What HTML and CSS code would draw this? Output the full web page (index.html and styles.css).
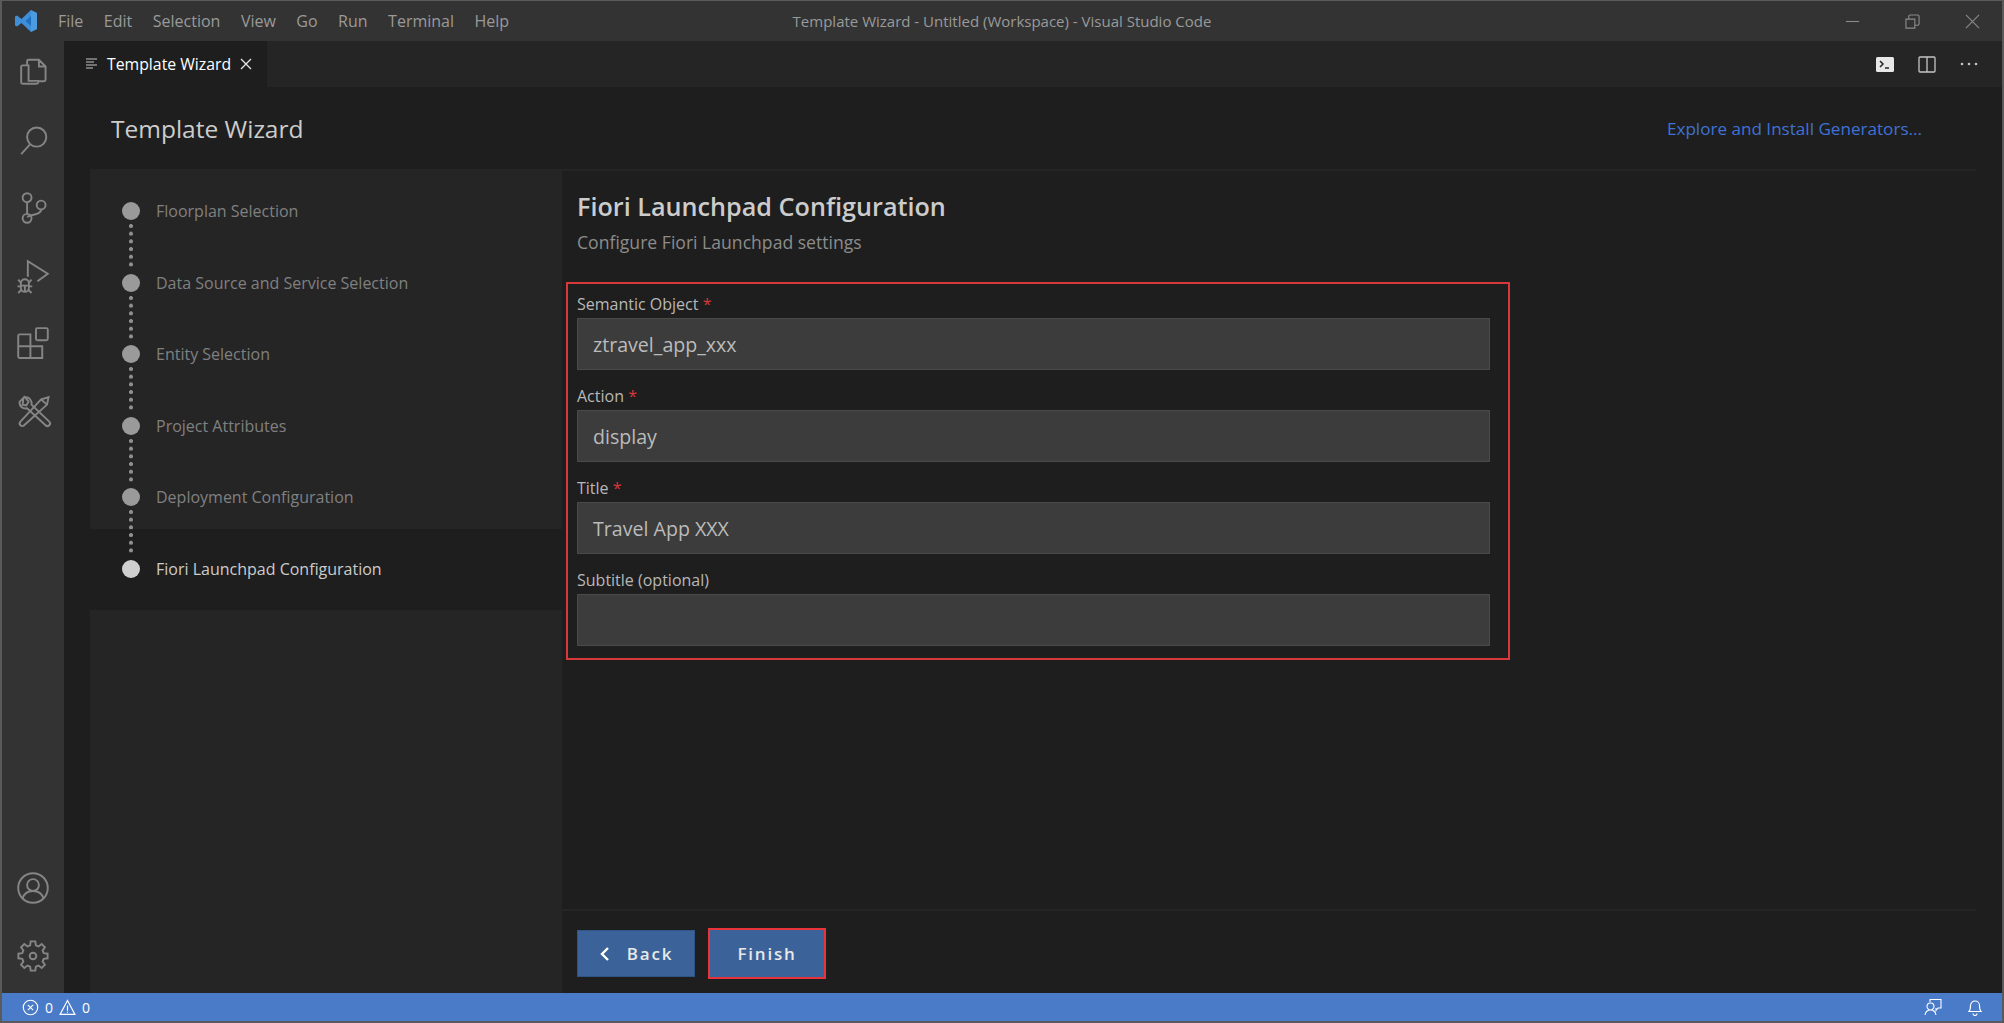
FILE: index.html
```html
<!DOCTYPE html>
<html>
	<head>
		<meta charset="UTF-8">
		<title>Template Wizard - Untitled (Workspace) - Visual Studio Code</title>
		<link rel="stylesheet" href="styles.css">
	</head>
	<body>
		<div class="window">
			<!--title bar-->
			<div class="titlebar">
				<div class="titlebar-left">
					<svg class="logo" viewBox="0 0 24 24"><path fill="#3f8fd8" d="M17 1l6 3v16l-6 3L7.500 14 3 17.500 1 16.500V7.500L3 6.500 7.500 10z"/><path fill="#1f6fc0" d="M17 7l-5.500 5 5.500 5z"/><path fill="#5aa7ea" d="M17 1l6 3v16l-6 3z" opacity=".5"/></svg>
					<ul class="menu">
						<li>File</li>
						<li>Edit</li>
						<li>Selection</li>
						<li>View</li>
						<li>Go</li>
						<li>Run</li>
						<li>Terminal</li>
						<li>Help</li>
					</ul>
				</div>
				<div class="window-title">Template Wizard - Untitled (Workspace) - Visual Studio Code</div>
				<div class="window-controls">
					<svg viewBox="0 0 16 16"><path d="M1 8h14"/></svg>
					<svg viewBox="0 0 16 16"><path d="M1 5.500h9.500v9.500h-9.500z M4 5.500v-3a1.500 1.500 0 0 1 1.500-1.500h8a1.500 1.500 0 0 1 1.500 1.500v8a1.500 1.500 0 0 1-1.500 1.500h-3"/></svg>
					<svg viewBox="0 0 16 16"><path d="M1 1l14 14M15 1l-14 14"/></svg>
				</div>
			</div>

			<div class="workbench">
				<!--activity bar-->
				<div class="activitybar">
					<div class="activity-top">
						<svg class="act-icon" viewBox="0 0 46 46"><path d="M15 14V8.500a2 2 0 0 1 2-2h14l9 9v18a2 2 0 0 1-2 2H30 M31 6.500v9h9 M17 35V14H9a2 2 0 0 0-2 2v21a2 2 0 0 0 2 2h19a2 2 0 0 0 2-2v-2z"/></svg>
						<svg class="act-icon" viewBox="0 0 46 46"><circle cx="28" cy="19" r="13"/><path d="M19 29L7 42"/></svg>
						<svg class="act-icon" viewBox="0 0 46 46"><circle cx="15" cy="9" r="6"/><circle cx="15" cy="37" r="6"/><circle cx="34" cy="19" r="6"/><path d="M15 15v16 M34 25c0 7-10 6-19 10"/></svg>
						<svg class="act-icon" viewBox="0 0 46 46"><path d="M16 24V3l27 17-14 10"/><path d="M6.500 33a5.500 5.500 0 0 1 11 0v6a5.500 5.500 0 0 1-11 0z M6.500 36h11 M12 36v8 M6.500 32L3 28 M17.500 32l3.500-4 M6.500 37H2 M17.500 37H22 M7 42l-4 4 M17 42l4 4"/></svg>
						<svg class="act-icon" viewBox="0 0 46 46"><path d="M5 10h14.500v16h16v16H5a2 2 0 0 1-2-2V12a2 2 0 0 1 2-2z M3 26h16.500v16 M29 1.500h12a2 2 0 0 1 2 2v12.500a2 2 0 0 1-2 2H29a2 2 0 0 1-2-2V3.500a2 2 0 0 1 2-2z"/></svg>
						<svg class="act-icon" viewBox="0 0 46 46"><path d="M10 4L5 9c-1 6 4 10 10 9l25 23a3 3 0 0 0 5-5L21 13c1-5-3-11-9-10l5 6-3 5-5-1z"/><path d="M44 3l-2 10L11 41a3 3 0 0 1-5-5L34 6z M34 6l8 7"/></svg>
					</div>
					<div class="activity-bottom">
						<svg class="act-icon" viewBox="0 0 46 46"><circle cx="23" cy="23" r="20"/><circle cx="23" cy="19" r="8"/><path d="M9 37c2-7 7-10 14-10s12 3 14 10"/></svg>
						<svg class="act-icon" viewBox="0 0 46 46"><polygon points="37.490,19.120 42.750,19.870 42.750,26.130 37.490,26.880 35.990,30.500 39.180,34.760 34.760,39.180 30.500,35.990 26.880,37.490 26.130,42.750 19.870,42.750 19.120,37.490 15.500,35.990 11.240,39.180 6.820,34.760 10.010,30.500 8.510,26.880 3.250,26.130 3.250,19.870 8.510,19.120 10.010,15.500 6.820,11.240 11.240,6.820 15.500,10.010 19.120,8.510 19.870,3.250 26.130,3.250 26.880,8.510 30.500,10.010 34.760,6.820 39.180,11.240 35.990,15.500"/><circle cx="23" cy="23" r="4.500"/></svg>
					</div>
				</div>

				<div class="editor">
					<!--tabs-->
					<div class="tabbar">
						<div class="tab">
							<svg class="tab-icon" viewBox="0 0 14 14"><path d="M1 2h11M1 5h8M1 8h11M1 11h7"/></svg>
							<span>Template Wizard</span>
							<svg class="tab-close" viewBox="0 0 12 12"><path d="M1 1l10 10M11 1l-10 10"/></svg>
						</div>
						<div class="tab-actions">
							<svg viewBox="0 0 20 20"><rect class="fill" x="1" y="3" width="18" height="15" rx="1.500"/><path class="cut" d="M5 7l3 3-3 3M10 14h4"/></svg>
							<svg viewBox="0 0 20 20"><path d="M2 4a1 1 0 0 1 1-1h14a1 1 0 0 1 1 1v13a1 1 0 0 1-1 1H3a1 1 0 0 1-1-1z M10 3v15"/></svg>
							<svg viewBox="0 0 20 20"><circle class="dot" cx="3" cy="10" r="1.300"/><circle class="dot" cx="10" cy="10" r="1.300"/><circle class="dot" cx="17" cy="10" r="1.300"/></svg>
						</div>
					</div>

					<!--wizard-->
					<div class="wizard">
						<div class="wizard-head">
							<h1>Template Wizard</h1>
							<a class="explore">Explore and Install Generators...</a>
						</div>
						<div class="wizard-body">
							<ul class="steps">
								<li><i></i>Floorplan Selection</li>
								<li><i></i>Data Source and Service Selection</li>
								<li><i></i>Entity Selection</li>
								<li><i></i>Project Attributes</li>
								<li><i></i>Deployment Configuration</li>
								<li class="active"><i></i>Fiori Launchpad Configuration</li>
							</ul>
							<div class="page">
								<div class="page-main">
									<h2>Fiori Launchpad Configuration</h2>
									<p class="page-sub">Configure Fiori Launchpad settings</p>
									<div class="form-box">
										<div class="field">
											<label>Semantic Object <b>*</b></label>
											<div class="input">ztravel_app_xxx</div>
										</div>
										<div class="field">
											<label>Action <b>*</b></label>
											<div class="input">display</div>
										</div>
										<div class="field">
											<label>Title <b>*</b></label>
											<div class="input">Travel App XXX</div>
										</div>
										<div class="field">
											<label>Subtitle (optional)</label>
											<div class="input"></div>
										</div>
									</div>
								</div>
								<div class="page-foot">
									<button class="btn btn-back"><svg viewBox="0 0 12 16"><path d="M9 2L3 8l6 6"/></svg>Back</button>
									<button class="btn btn-finish">Finish</button>
								</div>
							</div>
						</div>
					</div>
				</div>
			</div>

			<!--status bar-->
			<div class="statusbar">
				<div class="status-left">
					<svg viewBox="0 0 16 16"><circle cx="8" cy="8" r="6.800"/><path d="M5.500 5.500l5 5M10.500 5.500l-5 5"/></svg>
					<span>0</span>
					<svg viewBox="0 0 16 16"><path d="M8 1.500L15 14.500H1z M8 6v5M8 12v1"/></svg>
					<span>0</span>
				</div>
				<div class="status-right">
					<svg viewBox="0 0 18 18"><path d="M6 4V1.500h11V10h-3l-2 2.500V10 M6.500 5a3.500 3.500 0 1 1 0 7 3.500 3.500 0 0 1 0-7z M1 17c.5-3 2.500-5 5.500-5s5 2 5.500 5"/></svg>
					<svg viewBox="0 0 18 18"><path d="M3 13.500c1.500-1.500 1.500-3 1.500-6a4.500 4.500 0 0 1 9 0c0 3 0 4.500 1.500 6z M7 15.500a2 2 0 0 0 4 0"/></svg>
				</div>
			</div>
		</div>
	</body>
</html>
```

FILE: styles.css
```css
*{
	margin: 0px;
	padding: 0px;
	box-sizing: border-box;
}
ul,li{
	list-style: none;
}
html,body{
	height: 100%;
	overflow: hidden;
	background: #1e1e1e;
}
body{
	font-family: "Open Sans","Noto Sans","Liberation Sans",sans-serif;
}
svg{
	display: block;
	fill: none;
}
.window{
	height: 1023px;
	display: flex;
	flex-direction: column;
	border: 2px solid #5a5a5a;
	border-width: 1px 2px 2px 2px;
}

/* title bar */
.titlebar{
	height: 40px;
	background: #333333;
	display: grid;
	grid-template-columns: 1fr auto 1fr;
	align-items: center;
	flex-shrink: 0;
}
.titlebar-left{
	display: flex;
	align-items: center;
}
.logo{
	width: 24px;
	height: 24px;
	margin-left: 12px;
}
.menu{
	display: flex;
	margin-left: 20px;
	gap: 20.500px;
	font-size: 16px;
	color: #9a9a9a;
}
.window-title{
	font-size: 15px;
	color: #9a9a9a;
}
.window-controls{
	display: flex;
	justify-content: flex-end;
	gap: 45px;
	padding-right: 22px;
}
.window-controls svg{
	width: 15px;
	height: 15px;
	stroke: #8a8a8a;
	stroke-width: 1.200;
}

.workbench{
	flex: 1;
	display: flex;
	min-height: 0;
}

/* activity bar */
.activitybar{
	width: 62px;
	background: #333333;
	flex-shrink: 0;
	display: flex;
	flex-direction: column;
	justify-content: space-between;
	padding: 8px 0px 14px 0px;
}
.activity-top,.activity-bottom{
	display: flex;
	flex-direction: column;
	gap: 22px;
	align-items: center;
}
.act-icon{
	width: 34px;
	height: 46px;
	stroke: #858585;
	stroke-width: 2.600;
	overflow: visible;
}

.editor{
	flex: 1;
	display: flex;
	flex-direction: column;
	min-width: 0;
}

/* tabs */
.tabbar{
	height: 46px;
	background: #252526;
	display: flex;
	justify-content: space-between;
	flex-shrink: 0;
}
.tab{
	width: 203px;
	background: #1e1e1e;
	display: flex;
	align-items: center;
	padding-left: 21px;
	font-size: 15.800px;
	color: #ffffff;
}
.tab-icon{
	width: 14px;
	height: 14px;
	stroke: #c5c5c5;
	stroke-width: 1.200;
	margin-right: 8px;
}
.tab-close{
	width: 12px;
	height: 12px;
	stroke: #e8e8e8;
	stroke-width: 1.300;
	margin-left: 9px;
}
.tab-actions{
	display: flex;
	align-items: center;
	gap: 22px;
	padding-right: 23px;
}
.tab-actions svg{
	width: 20px;
	height: 20px;
	stroke: #c5c5c5;
	stroke-width: 1.300;
}
.tab-actions .fill{
	fill: #e8e8e8;
	stroke: none;
}
.tab-actions .cut{
	stroke: #252526;
	stroke-width: 1.500;
}
.tab-actions .dot{
	fill: #c5c5c5;
	stroke: none;
}

/* wizard */
.wizard{
	flex: 1;
	display: flex;
	flex-direction: column;
	min-height: 0;
	padding-left: 26px;
}
.wizard-head{
	height: 82px;
	display: flex;
	justify-content: space-between;
	align-items: center;
	padding: 0px 80px 0px 21px;
	flex-shrink: 0;
}
.wizard-head h1{
	font-size: 24.500px;
	font-weight: 400;
	color: #cccccc;
}
.explore{
	font-size: 17.100px;
	color: #3f72d4;
}
.wizard-body{
	flex: 1;
	display: flex;
	min-height: 0;
}

/* steps */
.steps{
	width: 472px;
	background: #252526;
	flex-shrink: 0;
}
.steps li{
	height: 71.600px;
	padding: 33px 0px 0px 32px;
	display: flex;
	align-items: flex-start;
	gap: 16px;
	font-size: 16px;
	line-height: 18px;
	color: #808080;
	position: relative;
}
.steps li i{
	width: 18px;
	height: 18px;
	border-radius: 50%;
	background: #9a9a9a;
	flex-shrink: 0;
}
.steps li:not(:last-child)::after{
	content: "";
	position: absolute;
	left: 39px;
	top: 55px;
	width: 4px;
	height: 46px;
	background: radial-gradient(circle at 2px 2px,#8f8f8f 1.900px,transparent 2.200px) 0px 0px / 4px 7.700px repeat-y;
	z-index: 1;
}
.steps li.active{
	height: 81px;
	margin-top: 2px;
	padding-top: 31px;
	background: #1e1e1e;
	color: #cccccc;
}
.steps li.active i{
	background: #cfcfcf;
}

/* page */
.page{
	flex: 1;
	display: flex;
	flex-direction: column;
	min-width: 0;
	border-top: 2px solid #252526;
	margin-right: 26px;
}
.page-main{
	flex: 1;
	padding: 19px 0px 0px 4px;
}
.page-main h2{
	font-size: 25.200px;
	font-weight: 600;
	line-height: 32px;
	color: #cccccc;
	padding-left: 11px;
}
.page-sub{
	font-size: 17.600px;
	line-height: 24px;
	margin-top: 8px;
	color: #8c8c8c;
	padding-left: 11px;
}
.form-box{
	width: 944px;
	height: 378px;
	margin-top: 28px;
	border: 2px solid #d8383a;
	padding: 8px 18px 0px 9px;
	display: flex;
	flex-direction: column;
	gap: 14px;
}
.field label{
	display: block;
	font-size: 16px;
	line-height: 24px;
	height: 26px;
	color: #b8b8b8;
}
.field label b{
	font-weight: 400;
	color: #d8383a;
}
.input{
	height: 52px;
	background: #3c3c3c;
	border: 1px solid #4a4a4a;
	padding: 0px 15px;
	font-size: 19.600px;
	line-height: 51px;
	color: #bbbbbb;
}
.page-foot{
	height: 84px;
	border-top: 2px solid #252526;
	padding: 3px 0px 0px 15px;
	display: flex;
	align-items: center;
	gap: 13px;
}
.btn{
	width: 118px;
	height: 47px;
	background: #3c6399;
	border: 1px solid #2f5486;
	color: #e8e8e8;
	font-family: inherit;
	font-size: 17px;
	font-weight: 600;
	letter-spacing: 1.800px;
	display: flex;
	align-items: center;
	justify-content: center;
}
.btn svg{
	width: 12px;
	height: 16px;
	stroke: #ffffff;
	stroke-width: 2.400;
	margin-right: 16px;
}
.btn-finish{
	height: 51px;
	border: 2px solid #e8333a;
}

/* status bar */
.statusbar{
	height: 28px;
	background: #4a7bc8;
	display: flex;
	justify-content: space-between;
	align-items: center;
	padding: 0px 18px 0px 20px;
	flex-shrink: 0;
	color: #ffffff;
	font-size: 14px;
}
.status-left,.status-right{
	display: flex;
	align-items: center;
	gap: 6px;
}
.status-left svg{
	width: 17px;
	height: 17px;
	stroke: #ffffff;
	stroke-width: 1.100;
}
.status-right{
	gap: 24px;
}
.status-right svg{
	width: 18px;
	height: 18px;
	stroke: #ffffff;
	stroke-width: 1.100;
}
```
